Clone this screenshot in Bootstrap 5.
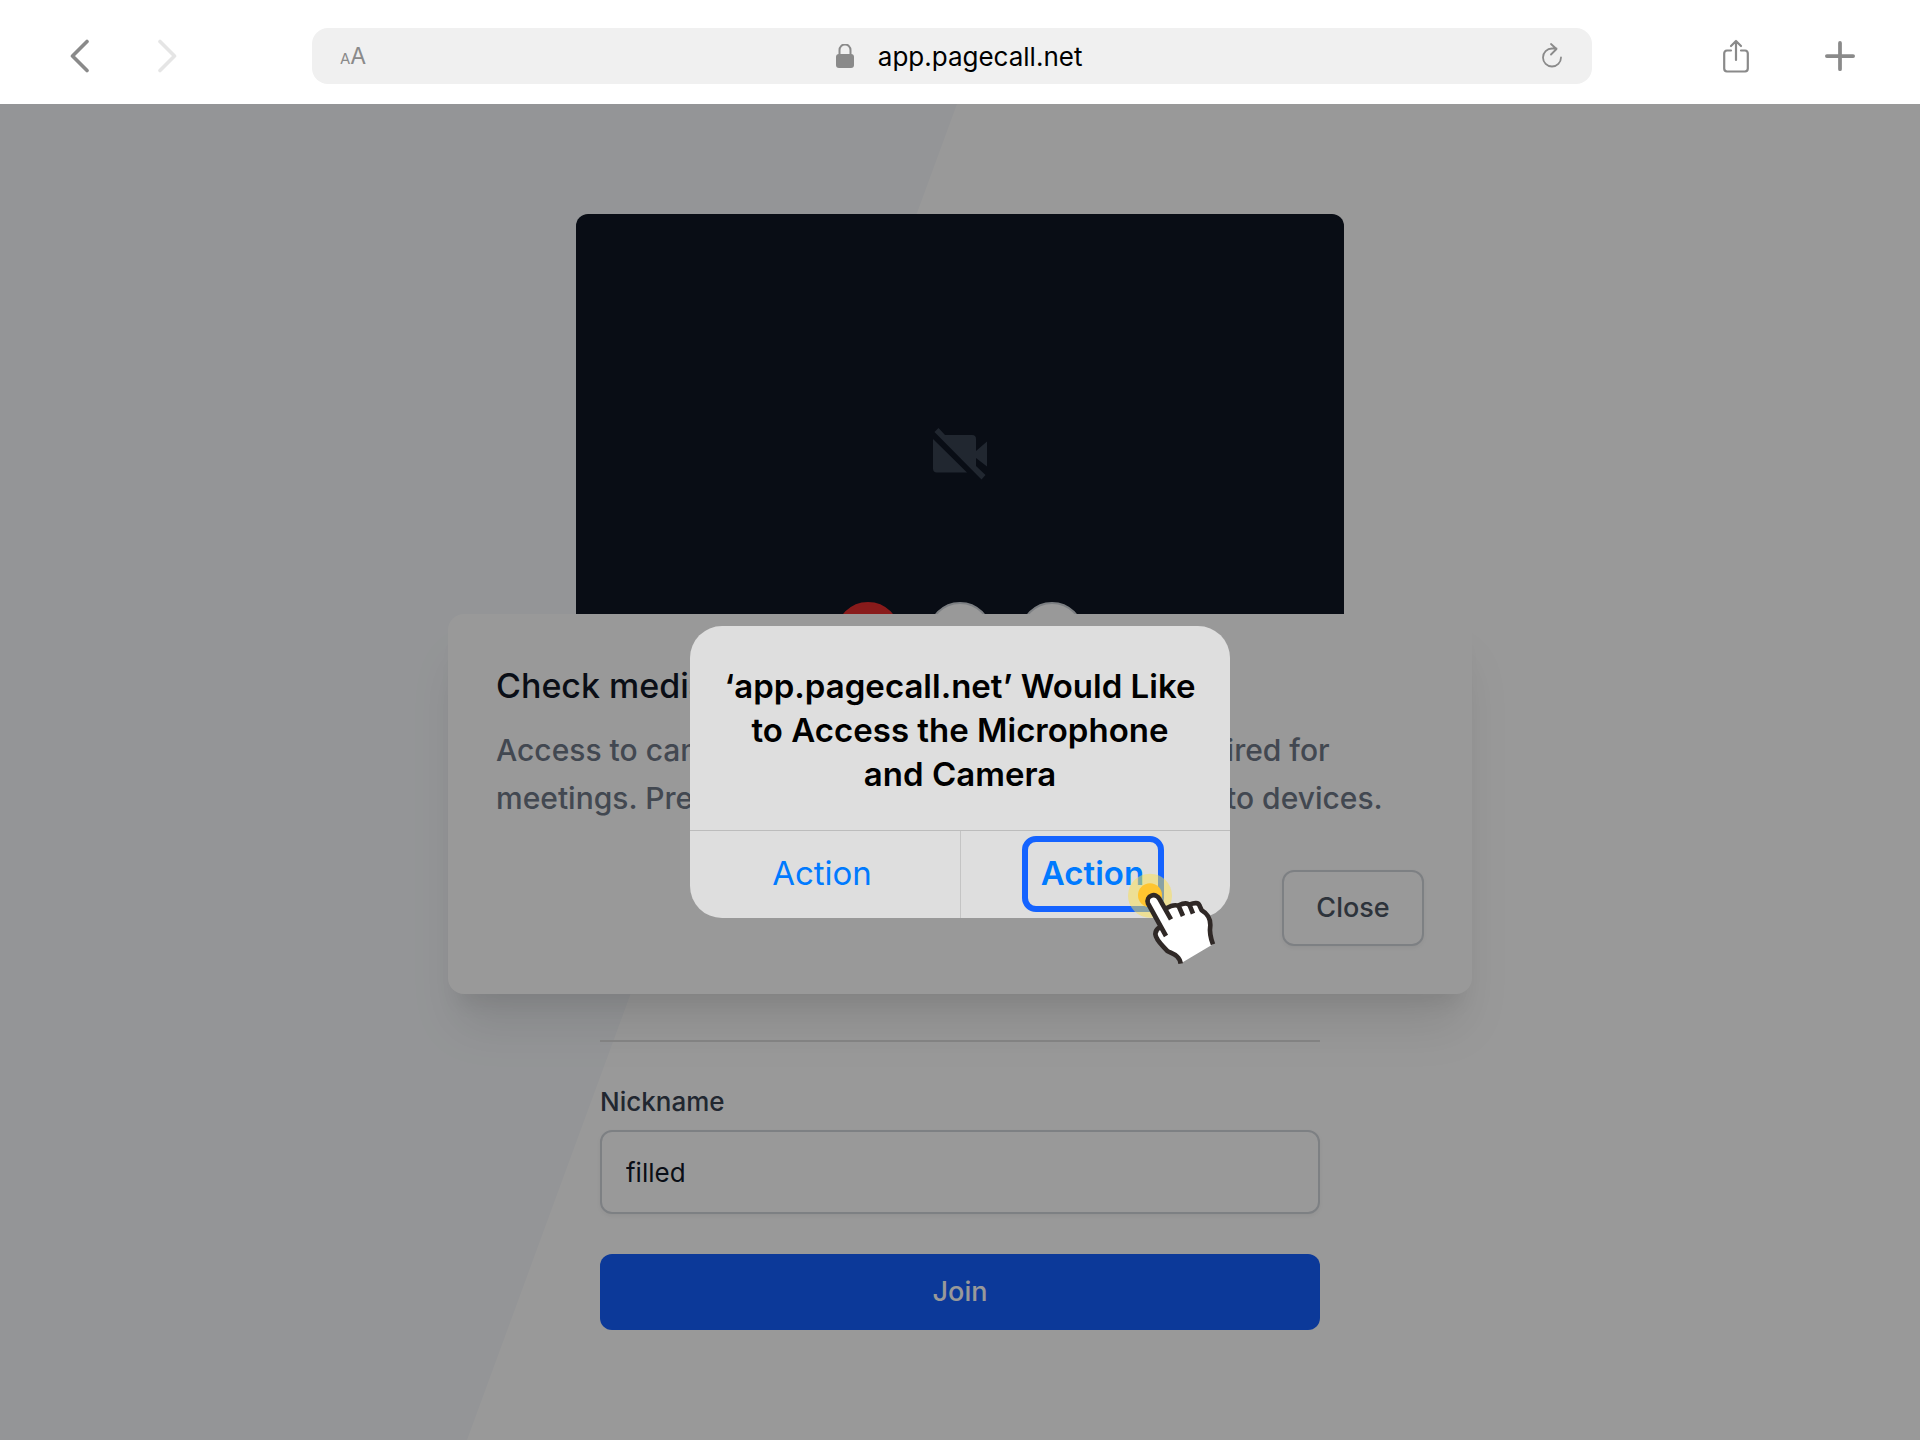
<!DOCTYPE html>
<html lang="en">
<head>
<meta charset="utf-8">
<meta name="viewport" content="width=device-width, initial-scale=1">
<title>Pagecall</title>
<link href="https://cdn.jsdelivr.net/npm/bootstrap@5.3.0/dist/css/bootstrap.min.css" rel="stylesheet">
<style>
  body { font-family: Inter, "Liberation Sans", sans-serif; color: #111827; }
  .browser-bar { height: 104px; padding-top: 8px; }
  .nav-side { width: 312px; padding-left: 64px; gap: 56px; }
  .nav-tools { width: 328px; padding-right: 64px; gap: 72px; }
  .icon-btn { width: 32px; height: 40px; color: #8a8a8a; }
  .icon-btn:disabled { color: #e5e5e5; border: 0; opacity: 1; }
  .address { height: 56px; border-radius: 16px; background: #f0f0f0; padding: 0 24px 0 28px; color: #8a8a8a; }
  .text-size { font-size: 23px; line-height: 32px; padding-top: 2px; color: #8a8a8a; }
  .text-size small { font-size: 15px; }
  .site { gap: 24px; padding: 2px 0 0 16px; }
  .site-name { font-size: 26px; line-height: 32px; color: #000; }

  .stage { min-height: calc(100vh - 104px); overflow: hidden; }
  .backdrop-shape { background: #f7f9fc; clip-path: polygon(0 0, 957px 0, 467px 100%, 0 100%); }
  .lobby { width: 768px; max-width: 100%; }
  .preview { height: 480px; border-radius: 12px; background: #0f1623; color: #374151; }
  .preview-controls { bottom: 28px; gap: 28px; }
  .round-btn { width: 64px; height: 64px; border-radius: 50%; border: 2px solid #d1d5db; background: #fff; }
  .round-btn.off { border-color: #e52d2d; background: #e52d2d; }
  .join-form { margin-top: 346px; padding: 0 24px; }
  .rule { height: 2px; margin: 0 0 40px; border: 0; background: #dfdfdf; opacity: 1; }
  .field-label { font-size: 26px; line-height: 40px; font-weight: 500; color: #374151; }
  .field { height: 84px; border: 2px solid #d1d5db; border-radius: 12px; padding: 0 24px; font-size: 26px; color: #111827; box-shadow: 0 2px 4px rgba(0,0,0,.05); }
  .action-btn { height: 76px; border-radius: 12px; font-size: 27px; font-weight: 500; }
  .join { margin-top: 40px; background: #1460ff; color: #fff; }

  .shade { background: rgba(0,0,0,.4); }
  .notice-layer { padding-top: 64px; }
  .notice { width: 1024px; max-width: 100%; border-radius: 16px; padding: 48px; background: #fff; box-shadow: 0 40px 50px -10px rgba(0,0,0,.1), 0 20px 20px -10px rgba(0,0,0,.06); }
  .notice h2 { font-size: 34px; line-height: 48px; font-weight: 500; margin: 0 0 16px; }
  .notice p { font-size: 30px; line-height: 48px; font-weight: 500; color: #6f7887; margin: 0 0 48px; white-space: nowrap; }
  .close-btn { width: 142px; border: 2px solid #d1d5db; color: #4b5563; background: #fff; box-shadow: 0 2px 4px rgba(0,0,0,.05); }

  .alert-box { width: 540px; border-radius: 32px; background: #dedede; color: #000; }
  .alert-box h1 { height: 204px; padding-top: 38px; margin: 0; font-size: 33px; line-height: 44px; font-weight: 600; }
  .alert-actions { height: 88px; border-top: 1px solid #bcbcbc; }
  .alert-actions > div { padding: 0 6px 2px 0; }
  .alert-actions > div + div { border-left: 1px solid #c4c4c4; }
  .alert-action { width: 142px; height: 76px; padding: 0; font-size: 33px; color: #007aff; }
  .alert-action.chosen { font-weight: 600; border: 6px solid #1463ff; border-radius: 14px; }
  .pointer { left: 100px; top: 28px; }
</style>
<script src="https://cdn.jsdelivr.net/npm/bootstrap@5.3.0/dist/js/bootstrap.bundle.min.js"></script>
</head>
<body>
<header class="browser-bar d-flex align-items-center bg-white">
  <nav class="nav-side d-flex flex-shrink-0" aria-label="History">
    <button class="icon-btn btn p-0 d-flex align-items-center justify-content-center" type="button" aria-label="Back">
      <svg width="20" height="34" viewBox="0 0 20 34" fill="none" stroke="currentColor" stroke-width="3.600" stroke-linecap="round" stroke-linejoin="round"><path d="M17 2.500L2.500 17L17 31.500"/></svg>
    </button>
    <button class="icon-btn btn p-0 d-flex align-items-center justify-content-center" type="button" aria-label="Forward" disabled>
      <svg width="20" height="34" viewBox="0 0 20 34" fill="none" stroke="currentColor" stroke-width="3.600" stroke-linecap="round" stroke-linejoin="round"><path d="M2 2.500L16.500 17L2 31.500"/></svg>
    </button>
  </nav>
  <div class="address flex-grow-1 d-flex align-items-center justify-content-between">
    <button class="text-size btn px-0 pb-0 border-0" type="button" aria-label="Text size"><small>A</small>A</button>
    <div class="site d-flex align-items-center">
      <svg width="18" height="26" viewBox="0 0 18 26"><rect y="10" width="18" height="14" rx="3" fill="currentColor"/><path d="M3.500 11V6a5.500 5.500 0 0 1 11 0V11" fill="none" stroke="currentColor" stroke-width="2"/></svg>
      <span class="site-name">app.pagecall.net</span>
    </div>
    <button class="icon-btn btn p-0 d-flex align-items-center justify-content-center" type="button" aria-label="Reload">
      <svg width="22" height="26" viewBox="0 0 22 26" fill="none" stroke="currentColor" stroke-width="1.800" stroke-linecap="round" stroke-linejoin="round"><path d="M20 14.500A9 9 0 1 1 11 5.500H15.500M10 1L15.500 6L10 11.500"/></svg>
    </button>
  </div>
  <div class="nav-tools d-flex flex-shrink-0 justify-content-end">
    <button class="icon-btn btn p-0 d-flex align-items-center justify-content-center" type="button" aria-label="Share">
      <svg width="26" height="34" viewBox="0 0 26 34" fill="none" stroke="currentColor" stroke-width="2.200" stroke-linecap="round" stroke-linejoin="round"><path d="M8 11.500H4A3 3 0 0 0 1.200 14.500V29.500A3 3 0 0 0 4 32.500H22A3 3 0 0 0 24.800 29.500V14.500A3 3 0 0 0 22 11.500H18M13 21V2M8 7L13 2L18 7"/></svg>
    </button>
    <button class="icon-btn btn p-0 d-flex align-items-center justify-content-center" type="button" aria-label="New tab">
      <svg width="32" height="32" viewBox="0 0 32 32" fill="none" stroke="currentColor" stroke-width="4" stroke-linecap="round"><path d="M16 2V30M2 16H30"/></svg>
    </button>
  </div>
</header>

<main class="stage position-relative d-flex align-items-center justify-content-center bg-white">
  <div class="backdrop-shape position-absolute top-0 start-0 w-100 h-100"></div>

  <section class="lobby position-relative">
    <div class="preview position-relative d-flex align-items-center justify-content-center">
      <svg width="60" height="58" viewBox="0 0 60 58" fill="currentColor" role="img" aria-label="Camera off"><path d="M15 10H42Q46 10 46 14V26L57 16.500V41.500L46 33V41L55.500 50L51.500 54.500L4.500 7L8.500 3ZM3 14L37 47.500H7Q3 47.500 3 43.500Z"/></svg>
      <div class="preview-controls position-absolute d-flex">
        <button class="round-btn off" type="button" aria-label="Camera"></button>
        <button class="round-btn" type="button" aria-label="Microphone"></button>
        <button class="round-btn" type="button" aria-label="Settings"></button>
      </div>
    </div>
    <form class="join-form">
      <hr class="rule">
      <label class="field-label d-block mb-2" for="nickname">Nickname</label>
      <input class="field form-control" id="nickname" type="text" value="filled">
      <button class="join action-btn btn w-100" type="button">Join</button>
    </form>
  </section>

  <div class="notice-layer position-absolute top-0 start-0 w-100 h-100 d-flex align-items-center justify-content-center">
    <section class="notice">
      <h2>Check media devices</h2>
      <p>Access to camera and microphone systems is required for<br>meetings. Press the buttons below to allow access to devices.</p>
      <div class="d-flex justify-content-end">
        <button class="close-btn action-btn btn" type="button">Close</button>
      </div>
    </section>
  </div>

  <div class="shade position-absolute top-0 start-0 w-100 h-100 d-flex align-items-center justify-content-center">
    <section class="alert-box text-center" role="alertdialog" aria-labelledby="alert-title">
      <h1 id="alert-title">‘app.pagecall.net’ Would Like<br>to Access the Microphone<br>and Camera</h1>
      <div class="alert-actions d-flex">
        <div class="w-50 d-flex align-items-center justify-content-center">
          <button class="alert-action btn" type="button">Action</button>
        </div>
        <div class="w-50 d-flex align-items-center justify-content-center">
          <button class="alert-action chosen btn position-relative" type="button">Action
            <svg class="pointer position-absolute" width="90" height="95" viewBox="24 150 270 285" aria-hidden="true">
              <circle cx="90" cy="227" r="66" fill="#fbe04b" fill-opacity=".5"/>
              <circle cx="90" cy="226" r="36" fill="#ffc52f"/>
              <path fill="#fff" d="M183 430C178 405 160 400 142 392C128 376 108 360 106 342Q106 330 119 322L84 250C78 228 108 214 120 238L134 264Q160 250 178 254Q200 244 212 252Q240 242 244 268Q270 282 271 315C268 335 272 355 279 373Z"/>
              <path fill="none" stroke="#2f2826" stroke-width="14" stroke-linejoin="round" d="M182 431C178 405 158 402 142 393C128 376 108 362 106 342Q106 330 119 322M138 348L84 250C76 228 108 214 119 238L153 298M139 265Q162 251 176 258L189 288M176 256Q200 244 209 256L219 281M207 254Q234 244 238 256L245 271Q271 286 271 315C268 335 272 355 279 373"/>
            </svg>
          </button>
        </div>
      </div>
    </section>
  </div>
</main>
</body>
</html>
